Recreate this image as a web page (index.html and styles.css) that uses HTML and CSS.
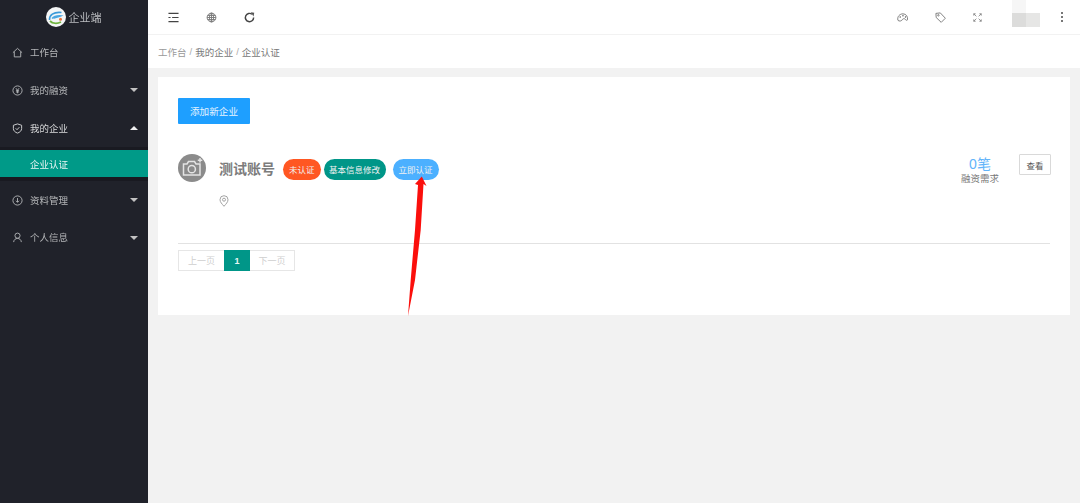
FILE: index.html
```html
<!DOCTYPE html>
<html lang="zh-CN">
<head>
    <meta charset="UTF-8">
    <meta name="viewport" content="width=device-width, initial-scale=1.0">
    <title>企业认证</title>
    <link rel="stylesheet" href="styles.css">
</head>
<body>

    <!-- Sidebar -->
    <aside class="sidebar">
        <div class="logo">
            <svg class="logo-mark" viewBox="0 0 20 20">
                <circle cx="10" cy="10" r="10" fill="#f4f6f6"/>
                <path d="M3.500 13C3 8.500 7.500 4.500 15.500 5.500" fill="none" stroke="#3a9ad9" stroke-width="1.600"/>
                <path d="M6 11.500C8 9 11.500 8.500 15.500 8.800 13.500 10 10 10.500 7.500 11" fill="none" stroke="#4aa6e0" stroke-width="1.300"/>
                <path d="M4 14c2.500 2.500 7 3 11 1" fill="none" stroke="#6fb43f" stroke-width="1.800"/>
                <circle cx="14.500" cy="12.300" r="1.500" fill="#e8743b"/>
            </svg>
            <span>企业端</span>
        </div>
        <nav class="menu">
            <a class="menu-item">
                <svg class="menu-icon" viewBox="0 0 12 12"><path d="M1 6.200 6 1.500 11 6.200M2.500 5V10.800H9.500V5"/></svg>
                <span>工作台</span>
            </a>
            <a class="menu-item">
                <svg class="menu-icon" viewBox="0 0 12 12"><circle cx="6" cy="6" r="5"/><path d="M4.300 3.500 6 5.800 7.700 3.500M6 5.800V9M4.300 6.200H7.700M4.300 7.600H7.700"/></svg>
                <span>我的融资</span>
                <i class="caret"></i>
            </a>
            <a class="menu-item is-open">
                <svg class="menu-icon" viewBox="0 0 12 12"><path d="M6 1 10.500 2.500V6C10.500 8.500 8.500 10.200 6 11 3.500 10.200 1.500 8.500 1.500 6V2.500Z"/><path d="M4 5.800 5.500 7.300 8 4.600"/></svg>
                <span>我的企业</span>
                <i class="caret caret-up"></i>
            </a>
            <div class="submenu">
                <a class="submenu-item">企业认证</a>
            </div>
            <a class="menu-item">
                <svg class="menu-icon" viewBox="0 0 12 12"><circle cx="6" cy="6" r="5"/><path d="M6 3.300V7.800M4.300 6.300 6 8 7.700 6.300"/></svg>
                <span>资料管理</span>
                <i class="caret"></i>
            </a>
            <a class="menu-item menu-item-last">
                <svg class="menu-icon" viewBox="0 0 12 12"><circle cx="6" cy="4" r="2.800"/><path d="M1.800 11C2 8.500 3.800 7 6 7S10 8.500 10.200 11"/></svg>
                <span>个人信息</span>
                <i class="caret"></i>
            </a>
        </nav>
    </aside>

    <main class="main">
        <!-- Top bar -->
        <header class="topbar">
            <div class="topbar-left">
                <svg class="top-icon top-icon-dark" viewBox="0 0 12 12"><path d="M.5 1.500H11.500M.5 10.500H11.500M4.500 6H11.500M.5 6H2.800" stroke-width="1.300"/></svg>
                <svg class="top-icon" viewBox="0 0 12 12"><circle cx="6" cy="6" r="4.800"/><ellipse cx="6" cy="6" rx="2.200" ry="4.800"/><path d="M1.200 6H10.800M1.800 3.800H10.200M1.800 8.200H10.200M6 1.200V10.800"/></svg>
                <svg class="top-icon top-icon-dark" viewBox="0 0 12 12"><path d="M10.500 6A4.500 4.500 0 1 1 8.800 2.500" stroke-width="1.600"/><path class="fill" d="M7.400 .4 11.200 .7 10.400 4.800Z"/></svg>
            </div>
            <div class="topbar-right">
                <svg class="top-icon" viewBox="0 0 12 12"><path d="M1 9C0 5 3 2 6.500 2S12 5 11.500 8.500C11 9.500 9.500 9 9 8 8.500 7 7 7 6 8 5.500 10 2 10.500 1 9Z"/><circle class="fill" cx="3.500" cy="5.500" r=".8"/><circle class="fill" cx="6.500" cy="4" r=".8"/><circle class="fill" cx="9.300" cy="5.500" r=".8"/></svg>
                <svg class="top-icon" viewBox="0 0 12 12"><path d="M1 1.500 5.800 1 11.300 6.800 6.800 11.300 1.300 6Z"/><circle cx="3.700" cy="3.600" r=".8"/></svg>
                <svg class="top-icon top-icon-small" viewBox="0 0 12 12"><path d="M1 3.500V1H3.500M8.500 1H11V3.500M11 8.500V11H8.500M3.500 11H1V8.500"/><path d="M1 1 4.500 4.500M11 1 7.500 4.500M11 11 7.500 7.500M1 11 4.500 7.500"/></svg>
                <div class="avatar-mosaic">
                    <span class="mosaic-top"></span>
                    <span class="mosaic-a"></span>
                    <span class="mosaic-b"></span>
                </div>
                <div class="dots"><i></i><i></i><i></i></div>
            </div>
        </header>

        <!-- Breadcrumb -->
        <div class="breadcrumb">
            <span class="crumb-first">工作台</span>
            <span class="crumb-sep">/</span>
            <span>我的企业</span>
            <span class="crumb-sep">/</span>
            <span>企业认证</span>
        </div>

        <div class="content">
            <section class="card">
                <button class="btn-add">添加新企业</button>

                <div class="company">
                    <div class="company-photo">
                        <svg viewBox="0 0 28 28">
                            <path d="M5.500 10H9L10.500 7.500H16.500L18 10H22V21H5.500Z"/>
                            <circle cx="13.800" cy="15.200" r="3.600"/>
                            <path d="M22 4V8.500M19.800 6.200H24.300"/>
                        </svg>
                    </div>
                    <div class="company-body">
                        <div class="company-title">
                            <h2>测试账号</h2>
                            <span class="tag tag-orange">未认证</span>
                            <span class="tag tag-teal">基本信息修改</span>
                            <span class="tag tag-blue">立即认证</span>
                        </div>
                        <svg class="pin" viewBox="0 0 10 12"><path d="M5 11.300C3 9 1 7 1 4.700A4 4 0 0 1 9 4.700C9 7 7 9 5 11.300Z"/><circle cx="5" cy="4.700" r="1.500"/></svg>
                    </div>
                    <div class="company-stat">
                        <div class="stat-num">0笔</div>
                        <div class="stat-label">融资需求</div>
                    </div>
                    <button class="btn-view">查看</button>
                </div>

                <div class="pager">
                    <span class="page-btn page-prev">上一页</span>
                    <span class="page-num">1</span>
                    <span class="page-btn page-next">下一页</span>
                </div>
            </section>
        </div>
    </main>

    <!-- Red annotation arrow drawn over the page -->
    <svg class="arrow" viewBox="0 0 30 150">
        <path d="M16.800 4.500 21.500 14 18.500 12 15.700 58 10 108 3 144 5.700 108 10 58 13 13 10 12Z" fill="#fb0f0c"/>
    </svg>

</body>
</html>
```

FILE: styles.css
```css
* {
    box-sizing: border-box;
}

html, body {
    margin: 0;
    height: 100%;
}

body {
    display: flex;
    height: 503px;
    overflow: hidden;
    background: #f2f2f2;
    font-family: "Liberation Sans", "Noto Sans CJK SC", sans-serif;
    font-size: 9.500px;
    color: #666;
    filter: blur(0.5px);
}

/* Sidebar */
.sidebar {
    width: 148px;
    flex-shrink: 0;
    background: #20222a;
    color: #b4b6b8;
}

.logo {
    height: 33px;
    display: flex;
    align-items: center;
    justify-content: center;
    gap: 3px;
    padding-right: 1px;
    font-size: 11px;
    color: #bbbdc0;
}

.logo-mark {
    width: 20px;
    height: 20px;
}

.menu-item {
    height: 38px;
    display: flex;
    align-items: center;
    padding-left: 12px;
    position: relative;
}

.menu-item-last {
    height: 36px;
}

.menu-item.is-open {
    color: #d8d9da;
}

.menu-icon {
    width: 11px;
    height: 11px;
    margin-right: 7px;
    fill: none;
    stroke: currentColor;
    stroke-width: 1;
}

.caret {
    position: absolute;
    right: 10px;
    top: 17px;
    border: 4px solid transparent;
    border-top-color: #c2c2c2;
    border-bottom: 0;
}

.caret-up {
    border-top: 0;
    border-bottom: 4px solid #f0f0f0;
}

.submenu {
    height: 34px;
    padding: 3px 0 4px;
    background: #191a21;
}

.submenu-item {
    height: 27px;
    display: flex;
    align-items: center;
    padding-left: 30px;
    background: #009a88;
    color: #e8f6f4;
}

/* Main column */
.main {
    flex: 1;
    min-width: 0;
    display: flex;
    flex-direction: column;
}

.topbar {
    height: 35px;
    display: flex;
    align-items: center;
    justify-content: space-between;
    background: #fff;
    border-bottom: 1px solid #f2f2f2;
}

.topbar-left {
    display: flex;
    gap: 27px;
    padding-left: 20px;
}

.topbar-right {
    display: flex;
    align-items: center;
    padding-right: 17px;
}

.top-icon {
    width: 11px;
    height: 11px;
    fill: none;
    stroke: #777;
    stroke-width: 1;
}

.top-icon-dark {
    stroke: #444;
}

.top-icon .fill {
    fill: #555;
    stroke: none;
}

.topbar-right .top-icon {
    margin-right: 27px;
}

.topbar-right .top-icon-small {
    width: 9px;
    height: 9px;
    margin-right: 30px;
}

.avatar-mosaic {
    position: relative;
    width: 28px;
    height: 14px;
    margin-top: 6px;
    margin-right: 21px;
    display: flex;
}

.mosaic-top {
    position: absolute;
    left: 0;
    bottom: 14px;
    width: 14px;
    height: 13px;
    background: #f6f6f6;
}

.mosaic-a {
    width: 14px;
    background: #dcdcdb;
}

.mosaic-b {
    width: 14px;
    background: #e6e6e5;
}

.dots {
    display: flex;
    flex-direction: column;
    gap: 2px;
}

.dots i {
    width: 2px;
    height: 2px;
    background: #777;
}

.breadcrumb {
    height: 33px;
    display: flex;
    align-items: center;
    gap: 3px;
    padding-left: 10px;
    background: #fff;
    color: #777;
}

.crumb-first {
    color: #999;
}

.crumb-sep {
    color: #aaa;
}

.content {
    flex: 1;
    padding: 9px 10px;
}

.card {
    height: 238px;
    padding: 21px 20px 0;
    background: #fff;
}

.btn-add {
    display: block;
    width: 72px;
    height: 26px;
    padding: 0;
    border: 0;
    border-radius: 1px;
    background: #1e9fff;
    color: #e6f4ff;
    font: inherit;
    font-size: 9.600px;
}

.company {
    display: flex;
    align-items: flex-start;
    height: 90px;
    margin-top: 30px;
    border-bottom: 1px solid #e2e2e2;
}

.company-photo {
    width: 28px;
    height: 28px;
    border-radius: 50%;
    background: #8b8b8b;
    flex-shrink: 0;
    margin-right: 13px;
}

.company-photo svg {
    display: block;
    fill: none;
    stroke: #e4e4e4;
    stroke-width: 1.500;
}

.company-body {
    flex: 1;
}

.company-title {
    display: flex;
    align-items: center;
    height: 22px;
    margin-top: 4px;
}

.company-title h2 {
    margin: 0 8px 2px 0;
    font-size: 14px;
    font-weight: 700;
    color: #7c7c7c;
}

.tag {
    height: 21px;
    padding: 0 6px;
    display: flex;
    align-items: center;
    border-radius: 11px;
    color: #f2f2f2;
    font-size: 8.500px;
}

.tag-orange {
    background: #ff5722;
    margin-right: 3px;
}

.tag-teal {
    width: 62px;
    padding: 0;
    justify-content: center;
    background: #009688;
    margin-right: 7px;
}

.tag-blue {
    background: #4cb0ff;
}

.pin {
    display: block;
    width: 10px;
    height: 12px;
    margin-top: 15px;
    fill: none;
    stroke: #a4a4a4;
    stroke-width: 1;
}

.company-stat {
    width: 40px;
    margin-right: 19px;
    margin-top: 1px;
    text-align: center;
}

.stat-num {
    font-size: 14px;
    line-height: 18px;
    color: #62b4fa;
}

.stat-label {
    font-size: 9.500px;
    line-height: 12px;
    color: #777;
}

.btn-view {
    width: 32px;
    height: 21px;
    margin-right: -1px;
    padding: 0;
    background: #fff;
    border: 1px solid #d9d9d9;
    border-radius: 1px;
    color: #555;
    font: inherit;
    font-size: 8.500px;
}

.pager {
    display: flex;
    height: 21px;
    margin-top: 6px;
    border-radius: 1px;
}

.page-btn {
    width: 46px;
    display: flex;
    align-items: center;
    justify-content: center;
    border: 1px solid #e6e6e6;
    color: #cfcfcf;
    font-size: 9px;
}

.page-prev {
    border-right: 0;
}

.page-next {
    width: 45px;
    border-left: 0;
}

.page-num {
    width: 26px;
    display: flex;
    align-items: center;
    justify-content: center;
    background: #009688;
    color: #e8f6f4;
    font-size: 9px;
    font-weight: 700;
}

/* Annotation lying over the page */
.arrow {
    position: absolute;
    left: 405px;
    top: 172px;
    width: 30px;
    height: 150px;
    overflow: visible;
}
```
